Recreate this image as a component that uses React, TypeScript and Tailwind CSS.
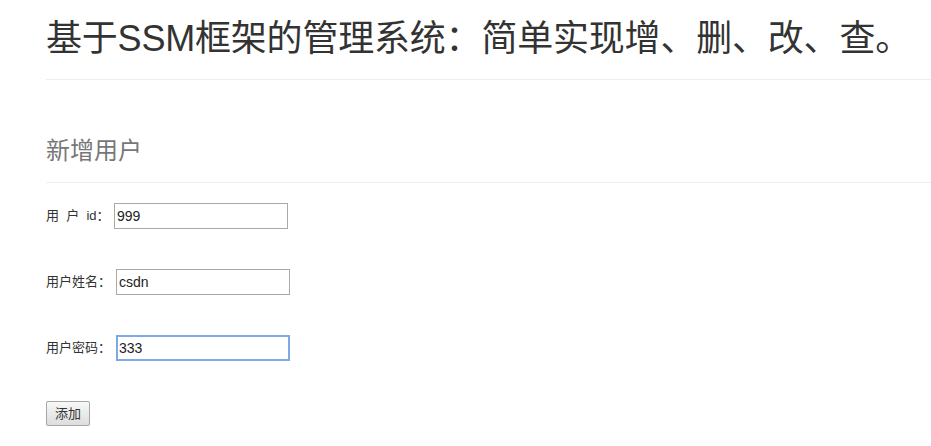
const FONT = "font-['Liberation_Sans','Noto_Sans_CJK_SC',sans-serif]";

const FIELDS = [
  { label: "用  户  id：", value: "999", labelWidth: "w-[68px]", focused: false },
  { label: "用户姓名：", value: "csdn", labelWidth: "w-[70px]", focused: false },
  { label: "用户密码：", value: "333", labelWidth: "w-[70px]", focused: true },
];

export default function App() {
  return (
    <main className={`min-h-[446px] bg-white pl-[46px] text-[#333] ${FONT}`}>
      {/* Page header */}
      <header className="mt-[19px] border-b border-[#eee] pb-[20px]">
        <h1 className="whitespace-nowrap text-[36px] leading-[40px] font-normal tracking-[-0.2px]">
          基于SSM框架的管理系统：简单实现增、删、改、查。
        </h1>
      </header>

      <section className="mt-[57px]">
        <h2 className="border-b border-[#eee] pb-[17px] text-[24px] leading-[28px] font-normal text-[#777]">
          新增用户
        </h2>

        <form className="mt-[20px] flex flex-col gap-[40px]">
          {FIELDS.map((f) => (
            <div key={f.label} className="flex h-[26px] items-center">
              <label className={`${f.labelWidth} whitespace-pre text-[13px]`}>{f.label}</label>
              <input
                type="text"
                defaultValue={f.value}
                className={
                  f.focused
                    ? "h-[26px] w-[174px] border-2 border-[#7ea9e8] px-[1px] text-[14px] text-[#222] outline-none"
                    : "h-[26px] w-[174px] border border-[#a9a9a9] px-[2px] text-[14px] text-[#222] outline-none"
                }
              />
            </div>
          ))}
          <div>
            <button
              type="button"
              className="h-[25px] w-[44px] rounded-[2px] border border-[#a6a6a6] bg-gradient-to-b from-[#f8f8f8] to-[#dddddd] text-[13px] text-[#333]"
            >
              添加
            </button>
          </div>
        </form>
      </section>
    </main>
  );
}
